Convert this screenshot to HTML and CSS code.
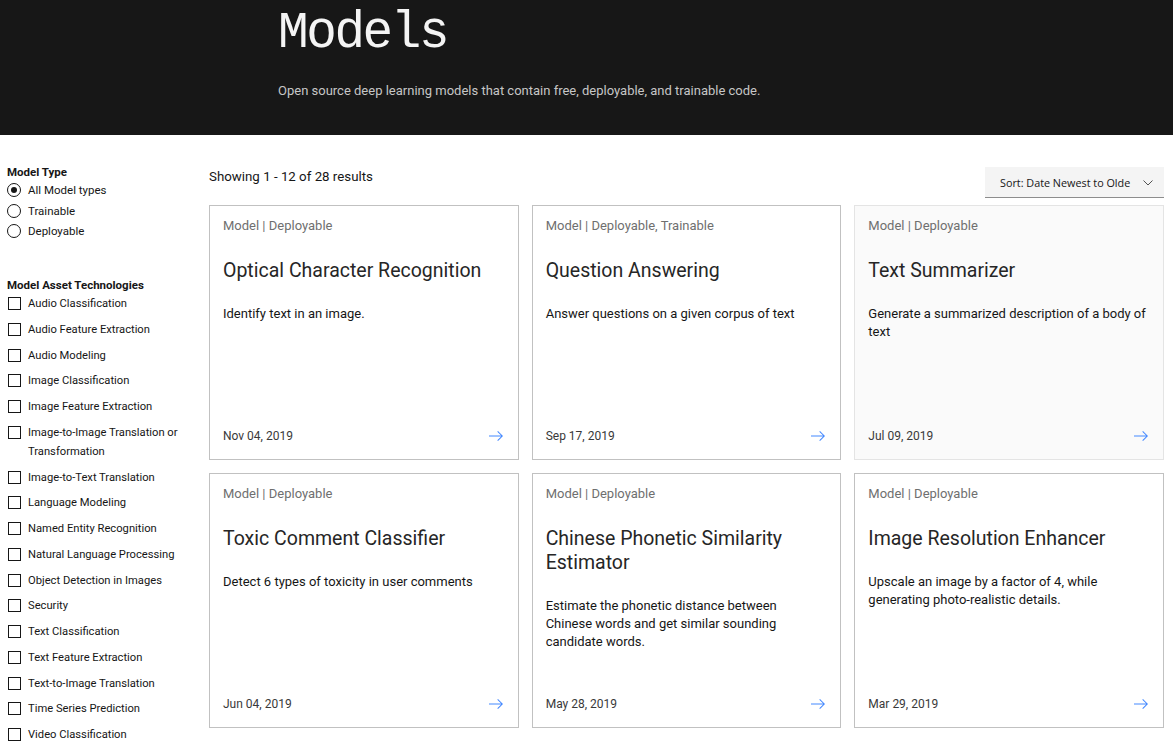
FILE: index.html
```html
<!DOCTYPE html>
<html lang="en">
<head>
<meta charset="utf-8">
<title>Models</title>
<link rel="stylesheet" href="styles.css">
</head>
<body>
<header class="hero">
  <h1 class="hero-title">Models</h1>
  <p class="hero-sub">Open source deep learning models that contain free, deployable, and trainable code.</p>
</header>
<div class="page">
  <aside class="filters">
    <h2 class="filter-title">Model Type</h2>
    <ul class="radio-list">
      <li class="radio-item"><span class="radio checked"></span>All Model types</li>
      <li class="radio-item"><span class="radio"></span>Trainable</li>
      <li class="radio-item"><span class="radio"></span>Deployable</li>
    </ul>
    <h2 class="filter-title tech">Model Asset Technologies</h2>
    <ul class="check-list">
      <li class="check-item"><span class="box"></span><span class="check-label">Audio Classification</span></li>
      <li class="check-item"><span class="box"></span><span class="check-label">Audio Feature Extraction</span></li>
      <li class="check-item"><span class="box"></span><span class="check-label">Audio Modeling</span></li>
      <li class="check-item"><span class="box"></span><span class="check-label">Image Classification</span></li>
      <li class="check-item"><span class="box"></span><span class="check-label">Image Feature Extraction</span></li>
      <li class="check-item"><span class="box"></span><span class="check-label">Image-to-Image Translation or Transformation</span></li>
      <li class="check-item"><span class="box"></span><span class="check-label">Image-to-Text Translation</span></li>
      <li class="check-item"><span class="box"></span><span class="check-label">Language Modeling</span></li>
      <li class="check-item"><span class="box"></span><span class="check-label">Named Entity Recognition</span></li>
      <li class="check-item"><span class="box"></span><span class="check-label">Natural Language Processing</span></li>
      <li class="check-item"><span class="box"></span><span class="check-label">Object Detection in Images</span></li>
      <li class="check-item"><span class="box"></span><span class="check-label">Security</span></li>
      <li class="check-item"><span class="box"></span><span class="check-label">Text Classification</span></li>
      <li class="check-item"><span class="box"></span><span class="check-label">Text Feature Extraction</span></li>
      <li class="check-item"><span class="box"></span><span class="check-label">Text-to-Image Translation</span></li>
      <li class="check-item"><span class="box"></span><span class="check-label">Time Series Prediction</span></li>
      <li class="check-item"><span class="box"></span><span class="check-label">Video Classification</span></li>
    </ul>
  </aside>
  <main class="results">
    <div class="toolbar">
      <p class="count">Showing 1 - 12 of 28 results</p>
      <div class="sort">
        <span class="sort-text">Sort: Date Newest to Olde</span>
        <svg class="chev" width="10" height="6" viewBox="0 0 10 6"><path d="M0.5 0.5 L5 5 L9.5 0.5" fill="none" stroke="#525252" stroke-width="1"/></svg>
      </div>
    </div>
    <div class="grid">
      <a class="card">
        <div class="tag">Model | Deployable</div>
        <h3 class="card-title">Optical Character Recognition</h3>
        <p class="desc">Identify text in an image.</p>
        <div class="card-foot"><span class="date">Nov 04, 2019</span><svg class="arrow" width="16" height="16" viewBox="0 0 16 16"><path d="M9.3 3.7L13.1 7.5 1 7.5 1 8.5 13.1 8.5 9.3 12.3 10 13 15 8 10 3z"/></svg></div>
      </a>
      <a class="card">
        <div class="tag">Model | Deployable, Trainable</div>
        <h3 class="card-title">Question Answering</h3>
        <p class="desc">Answer questions on a given corpus of text</p>
        <div class="card-foot"><span class="date">Sep 17, 2019</span><svg class="arrow" width="16" height="16" viewBox="0 0 16 16"><path d="M9.3 3.7L13.1 7.5 1 7.5 1 8.5 13.1 8.5 9.3 12.3 10 13 15 8 10 3z"/></svg></div>
      </a>
      <a class="card hover">
        <div class="tag">Model | Deployable</div>
        <h3 class="card-title">Text Summarizer</h3>
        <p class="desc">Generate a summarized description of a body of text</p>
        <div class="card-foot"><span class="date">Jul 09, 2019</span><svg class="arrow" width="16" height="16" viewBox="0 0 16 16"><path d="M9.3 3.7L13.1 7.5 1 7.5 1 8.5 13.1 8.5 9.3 12.3 10 13 15 8 10 3z"/></svg></div>
      </a>
      <a class="card">
        <div class="tag">Model | Deployable</div>
        <h3 class="card-title">Toxic Comment Classifier</h3>
        <p class="desc">Detect 6 types of toxicity in user comments</p>
        <div class="card-foot"><span class="date">Jun 04, 2019</span><svg class="arrow" width="16" height="16" viewBox="0 0 16 16"><path d="M9.3 3.7L13.1 7.5 1 7.5 1 8.5 13.1 8.5 9.3 12.3 10 13 15 8 10 3z"/></svg></div>
      </a>
      <a class="card">
        <div class="tag">Model | Deployable</div>
        <h3 class="card-title">Chinese Phonetic Similarity Estimator</h3>
        <p class="desc">Estimate the phonetic distance between Chinese words and get similar sounding candidate words.</p>
        <div class="card-foot"><span class="date">May 28, 2019</span><svg class="arrow" width="16" height="16" viewBox="0 0 16 16"><path d="M9.3 3.7L13.1 7.5 1 7.5 1 8.5 13.1 8.5 9.3 12.3 10 13 15 8 10 3z"/></svg></div>
      </a>
      <a class="card">
        <div class="tag">Model | Deployable</div>
        <h3 class="card-title">Image Resolution Enhancer</h3>
        <p class="desc">Upscale an image by a factor of 4, while generating photo-realistic details.</p>
        <div class="card-foot"><span class="date">Mar 29, 2019</span><svg class="arrow" width="16" height="16" viewBox="0 0 16 16"><path d="M9.3 3.7L13.1 7.5 1 7.5 1 8.5 13.1 8.5 9.3 12.3 10 13 15 8 10 3z"/></svg></div>
      </a>
    </div>
  </main>
</div>
</body>
</html>
```

FILE: styles.css
```css
* { box-sizing: border-box; }
html, body { margin: 0; padding: 0; background: #fff; }
body {
  font-family: Roboto, "Liberation Sans", Arial, sans-serif;
  color: #161616;
  overflow: hidden;
}
ul { list-style: none; margin: 0; padding: 0; }
p, h1, h2, h3 { margin: 0; }

.hero {
  background: #171717;
  height: 135px;
  padding: 6px 0 0 278px;
}
.hero-title {
  font-family: "Liberation Mono", "DejaVu Sans Mono", monospace;
  font-weight: 400;
  font-size: 51px;
  letter-spacing: -2.4px;
  line-height: 56px;
  color: #f4f4f4;
}
.hero-sub {
  margin-top: 20px;
  font-size: 13px;
  line-height: 18px;
  color: #c6c6c6;
}

.page { display: flex; }
.filters {
  width: 209px;
  flex: none;
  padding: 29px 8px 0 7px;
}
.filter-title {
  font-size: 11.5px;
  font-weight: 700;
  line-height: 16px;
  color: #161616;
}
.filter-title.tech { margin-top: 35px; }
.radio-item {
  display: flex;
  align-items: center;
  height: 20.5px;
  font-size: 11.5px;
  color: #161616;
}
.radio {
  width: 14px;
  height: 14px;
  border: 1.3px solid #161616;
  border-radius: 50%;
  margin-right: 7px;
  display: flex;
  align-items: center;
  justify-content: center;
  flex: none;
}
.radio.checked::after {
  content: "";
  width: 6px;
  height: 6px;
  border-radius: 50%;
  background: #161616;
}
.check-list {
  margin-top: 1.5px;
  display: flex;
  flex-direction: column;
  gap: 6.75px;
}
.check-item {
  display: flex;
  align-items: flex-start;
  font-size: 11.2px;
  line-height: 19px;
  color: #161616;
}
.box {
  width: 13px;
  height: 13px;
  border: 1.3px solid #161616;
  margin: 3px 7px 0 1px;
  flex: none;
}
.check-label { max-width: 170px; }

.results {
  flex: 1;
  padding: 32px 9px 0 0;
}
.toolbar {
  display: flex;
  justify-content: space-between;
  align-items: flex-start;
  height: 31px;
}
.count {
  font-size: 13.3px;
  line-height: 19px;
  color: #161616;
}
.sort {
  width: 179px;
  height: 31px;
  background: #f4f4f4;
  border-bottom: 1px solid #8d8d8d;
  display: flex;
  align-items: center;
  padding: 1px 11px 0 15px;
  gap: 6px;
}
.sort-text {
  font-family: "Open Sans", "DejaVu Sans", sans-serif;
  font-size: 10.8px;
  color: #161616;
  white-space: nowrap;
  flex: 1;
}
.chev { flex: none; }

.grid {
  margin-top: 7px;
  display: grid;
  grid-template-columns: repeat(3, 1fr);
  gap: 13px;
  grid-auto-rows: 255px;
}
.card {
  display: flex;
  flex-direction: column;
  border: 1px solid #c1c1c1;
  background: #fff;
  padding: 11px 15px 14px 13px;
  color: #161616;
}
.card.hover {
  background: #fafafa;
  border-color: #e4e4e4;
}
.tag {
  font-size: 13px;
  line-height: 18px;
  color: #6f6f6f;
}
.card-title {
  margin-top: 24px;
  font-size: 19.5px;
  font-weight: 400;
  line-height: 24px;
  color: #262626;
}
.desc {
  margin-top: 22px;
  font-size: 13px;
  line-height: 18px;
  color: #161616;
}
.card-foot {
  margin-top: auto;
  display: flex;
  justify-content: space-between;
  align-items: center;
  height: 18px;
}
.date {
  font-size: 12px;
  color: #393939;
}
.arrow { fill: #4589ff; margin-right: -1px; }
```
